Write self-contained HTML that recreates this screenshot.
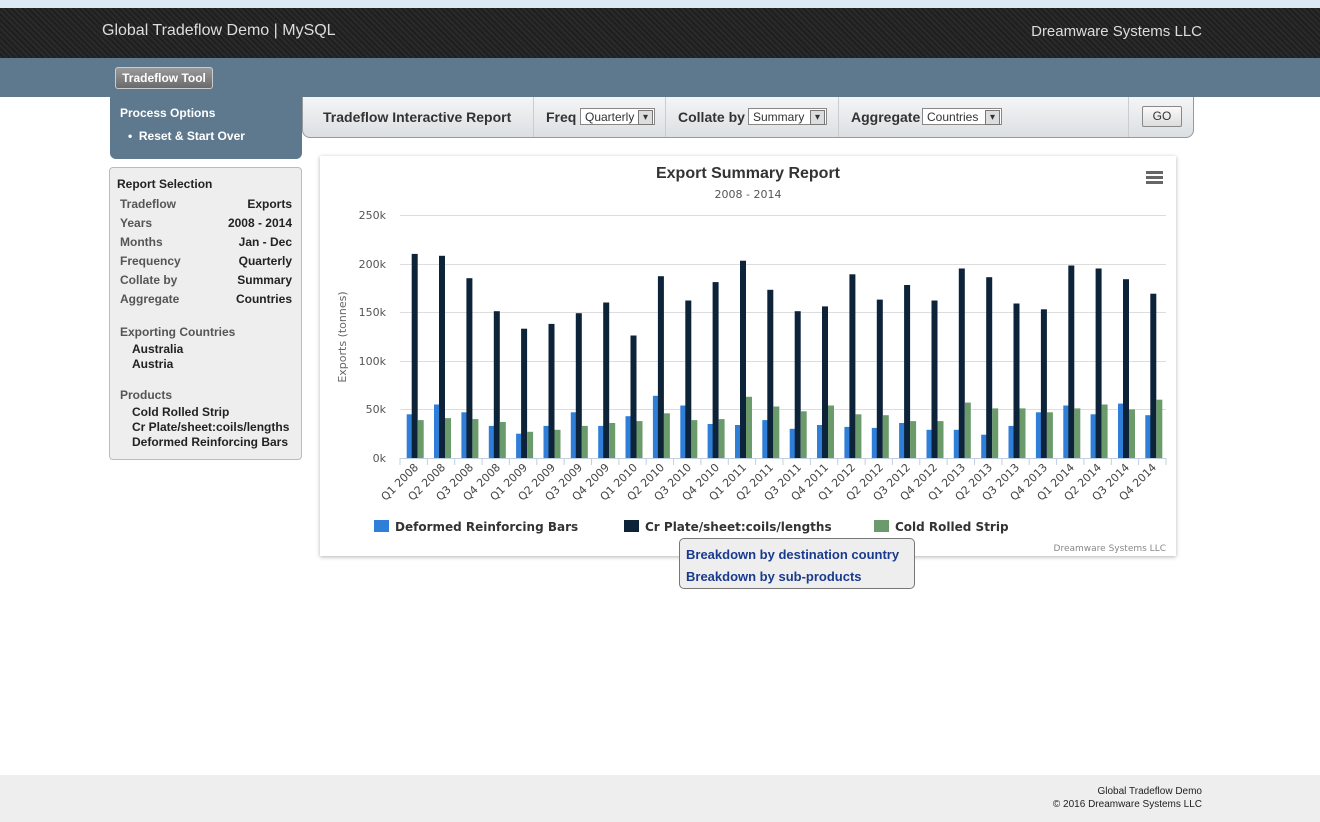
<!DOCTYPE html>
<html><head><meta charset="utf-8"><style>
body{margin:0;width:1320px;height:822px;position:relative;font-family:"Liberation Sans",Arial,sans-serif;background:#fff;overflow:hidden}
.top{position:absolute;left:0;top:0;width:1320px;height:8px;background:#dde8f5}
.hdr{position:absolute;left:0;top:8px;width:1320px;height:50px;background:repeating-linear-gradient(45deg,#2a2a2a 0 2px,#1f1f1f 2px 4px);background-color:#222}
.hdr .l{position:absolute;left:102px;top:14px;color:#ddd;font-size:16px}
.hdr .r{position:absolute;right:118px;top:15px;color:#ddd;font-size:15px}
.band{position:absolute;left:0;top:58px;width:1320px;height:39px;background:#5e798e}
.btn{position:absolute;left:115px;top:67px;width:96px;height:20px;border:1px solid #ccc;border-radius:3px;background:linear-gradient(#9a9a9a,#6a6a6a);color:#fff;font-size:12px;font-weight:bold;text-align:center;line-height:20px}
.po{position:absolute;left:110px;top:97px;width:192px;height:62px;background:#5e798e;border-radius:0 0 6px 6px;color:#fff;font-size:12px;font-weight:bold}
.bar{position:absolute;left:302px;top:97px;width:890px;height:40px;background:linear-gradient(#f4f5f6,#dcdfe2);border:1px solid #999;border-top:none;border-radius:0 0 8px 8px;font-size:14px;font-weight:bold;color:#333}
.sel{position:absolute;top:11px;height:17px;border:1px solid #888;background:#fff;font-size:12px;font-weight:normal;line-height:17px;padding-left:4px;box-sizing:border-box}
.sel:after{content:"▾";position:absolute;right:1px;top:1px;width:13px;height:13px;border:1px solid #777;background:#ddd;font-size:10px;line-height:13px;text-align:center}
.sep{position:absolute;top:0;width:1px;height:40px;background:#ccc}
.rs{position:absolute;left:109px;top:167px;width:191px;height:291px;border:1px solid #bbb;border-radius:4px;background:#eee;font-size:12px;font-weight:bold;color:#222}
.rs div{position:absolute}
.g{color:#555}
.chart{position:absolute;left:320px;top:156px;width:856px;height:400px;background:#fff;box-shadow:0 1px 4px rgba(0,0,0,.3)}
.pop{position:absolute;left:679px;top:538px;width:234px;height:49px;border:1px solid #777;border-radius:5px;background:#eee;font-size:13px;font-weight:bold;color:#1a3a8e}
.foot{position:absolute;left:0;top:775px;width:1320px;height:47px;background:#eee;font-size:10px;color:#222;text-align:right}
</style></head><body>
<div class="top"></div>
<div class="hdr"><div class="l">Global Tradeflow Demo | MySQL</div><div class="r">Dreamware Systems LLC</div></div>
<div class="band"></div>
<div class="btn">Tradeflow Tool</div>
<div class="po"><div style="position:absolute;left:10px;top:9px">Process Options</div><div style="position:absolute;left:18px;top:32px">•&nbsp; Reset &amp; Start Over</div></div>
<div class="bar">
<div style="position:absolute;left:20px;top:12px">Tradeflow Interactive Report</div>
<div class="sep" style="left:230px"></div>
<div style="position:absolute;left:243px;top:12px">Freq</div><div class="sel" style="left:277px;width:75px">Quarterly</div>
<div class="sep" style="left:362px"></div>
<div style="position:absolute;left:375px;top:12px">Collate by</div><div class="sel" style="left:445px;width:79px">Summary</div>
<div class="sep" style="left:535px"></div>
<div style="position:absolute;left:548px;top:12px">Aggregate</div><div class="sel" style="left:619px;width:80px">Countries</div>
<div class="sep" style="left:825px"></div>
<div style="position:absolute;left:839px;top:9px;width:38px;height:19px;border:1px solid #888;border-radius:2px;background:linear-gradient(#fafafa,#ddd);font-size:12px;font-weight:normal;text-align:center;line-height:19px">GO</div>
</div>
<div class="rs">
<div style="left:7px;top:9px">Report Selection</div>
<div class="g" style="left:10px;top:29px">Tradeflow</div><div style="right:9px;top:29px">Exports</div>
<div class="g" style="left:10px;top:48px">Years</div><div style="right:9px;top:48px">2008 - 2014</div>
<div class="g" style="left:10px;top:67px">Months</div><div style="right:9px;top:67px">Jan - Dec</div>
<div class="g" style="left:10px;top:86px">Frequency</div><div style="right:9px;top:86px">Quarterly</div>
<div class="g" style="left:10px;top:105px">Collate by</div><div style="right:9px;top:105px">Summary</div>
<div class="g" style="left:10px;top:124px">Aggregate</div><div style="right:9px;top:124px">Countries</div>
<div class="g" style="left:10px;top:157px">Exporting Countries</div>
<div style="left:22px;top:174px">Australia</div><div style="left:22px;top:189px">Austria</div>
<div class="g" style="left:10px;top:220px">Products</div>
<div style="left:22px;top:237px">Cold Rolled Strip</div>
<div style="left:22px;top:252px">Cr Plate/sheet:coils/lengths</div>
<div style="left:22px;top:267px">Deformed Reinforcing Bars</div>
</div>
<div class="chart"><svg width="856" height="400" viewBox="320 156 856 400" style="font-family:'DejaVu Sans',sans-serif">
<text x="748" y="178" text-anchor="middle" font-family="Liberation Sans" font-weight="bold" font-size="16" fill="#333">Export Summary Report</text>
<text x="748" y="198" text-anchor="middle" font-size="11" fill="#555">2008 - 2014</text>
<g fill="#666"><rect x="1146" y="171" width="17" height="3"/><rect x="1146" y="176" width="17" height="3"/><rect x="1146" y="181" width="17" height="3"/></g>
<g stroke="#ddd"><line x1="400" x2="1166" y1="215.5" y2="215.5"/><line x1="400" x2="1166" y1="264.5" y2="264.5"/><line x1="400" x2="1166" y1="312.5" y2="312.5"/><line x1="400" x2="1166" y1="361.5" y2="361.5"/><line x1="400" x2="1166" y1="409.5" y2="409.5"/></g>
<g font-size="11" fill="#555" text-anchor="end"><text x="386" y="219">250k</text><text x="386" y="268">200k</text><text x="386" y="316">150k</text><text x="386" y="365">100k</text><text x="386" y="413">50k</text><text x="386" y="462">0k</text></g>
<text transform="translate(346,337) rotate(-90)" text-anchor="middle" font-size="11" fill="#666">Exports (tonnes)</text>
<g id="bars"></g>
<line x1="400" x2="1166" y1="458.5" y2="458.5" stroke="#c0d0e0"/>
<g id="ticks" stroke="#c0d0e0"></g>
<g font-size="11" fill="#444" text-anchor="end">
<text transform="translate(419,468) rotate(-45)">Q1 2008</text><text transform="translate(446,468) rotate(-45)">Q2 2008</text><text transform="translate(474,468) rotate(-45)">Q3 2008</text><text transform="translate(501,468) rotate(-45)">Q4 2008</text><text transform="translate(528,468) rotate(-45)">Q1 2009</text><text transform="translate(556,468) rotate(-45)">Q2 2009</text><text transform="translate(583,468) rotate(-45)">Q3 2009</text><text transform="translate(610,468) rotate(-45)">Q4 2009</text><text transform="translate(638,468) rotate(-45)">Q1 2010</text><text transform="translate(665,468) rotate(-45)">Q2 2010</text><text transform="translate(692,468) rotate(-45)">Q3 2010</text><text transform="translate(720,468) rotate(-45)">Q4 2010</text><text transform="translate(747,468) rotate(-45)">Q1 2011</text><text transform="translate(774,468) rotate(-45)">Q2 2011</text><text transform="translate(802,468) rotate(-45)">Q3 2011</text><text transform="translate(829,468) rotate(-45)">Q4 2011</text><text transform="translate(856,468) rotate(-45)">Q1 2012</text><text transform="translate(884,468) rotate(-45)">Q2 2012</text><text transform="translate(911,468) rotate(-45)">Q3 2012</text><text transform="translate(938,468) rotate(-45)">Q4 2012</text><text transform="translate(966,468) rotate(-45)">Q1 2013</text><text transform="translate(993,468) rotate(-45)">Q2 2013</text><text transform="translate(1020,468) rotate(-45)">Q3 2013</text><text transform="translate(1048,468) rotate(-45)">Q4 2013</text><text transform="translate(1075,468) rotate(-45)">Q1 2014</text><text transform="translate(1102,468) rotate(-45)">Q2 2014</text><text transform="translate(1130,468) rotate(-45)">Q3 2014</text><text transform="translate(1157,468) rotate(-45)">Q4 2014</text>
</g>
<g font-size="12" font-weight="bold" fill="#333">
<rect x="374" y="520" width="15" height="12" fill="#2f7ed8"/><text x="395" y="531">Deformed Reinforcing Bars</text>
<rect x="624" y="520" width="15" height="12" fill="#0d233a"/><text x="645" y="531">Cr Plate/sheet:coils/lengths</text>
<rect x="874" y="520" width="15" height="12" fill="#6b9a6b"/><text x="895" y="531">Cold Rolled Strip</text>
</g>
<text x="1166" y="551" text-anchor="end" font-size="9" fill="#888">Dreamware Systems LLC</text>
</svg></div>
<div class="pop"><div style="position:absolute;left:6px;top:8px">Breakdown by destination country</div><div style="position:absolute;left:6px;top:30px">Breakdown by sub-products</div></div>
<div class="foot"><div style="position:absolute;right:118px;top:10px;line-height:13px">Global Tradeflow Demo<br>© 2016 Dreamware Systems LLC</div></div>
<script>
var b=[45,55,47,33,25,33,47,33,43,64,54,35,34,39,30,34,32,31,36,29,29,24,33,47,54,45,56,44],
d=[210,208,185,151,133,138,149,160,126,187,162,181,203,173,151,156,189,163,178,162,195,186,159,153,198,195,184,169],
g=[39,41,40,37,27,29,33,36,38,46,39,40,63,53,48,54,45,44,38,38,57,51,51,47,51,55,50,60];
var s='',t='',w=766/28;
for(var i=0;i<28;i++){var c=400+w*(i+.5);
[[b,'#2f7ed8',-7],[d,'#0d233a',-2],[g,'#6b9a6b',4]].forEach(function(a){var h=a[0][i]*0.972;s+='<rect x="'+(c+a[2]).toFixed(1)+'" y="'+(458-h).toFixed(1)+'" width="6" height="'+h.toFixed(1)+'" fill="'+a[1]+'"/>';});
var x=(400+w*i).toFixed(1);t+='<line x1="'+x+'" x2="'+x+'" y1="458" y2="465"/>';}
t+='<line x1="1166" x2="1166" y1="458" y2="465"/>';
document.getElementById('bars').innerHTML=s;document.getElementById('ticks').innerHTML=t;
</script>
</body></html>
